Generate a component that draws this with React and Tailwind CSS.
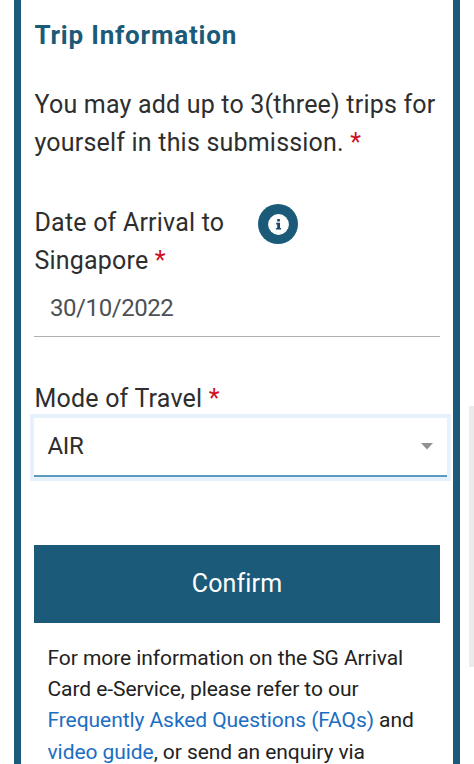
import { useState } from 'react';

export default function App() {
  const [date, setDate] = useState('30/10/2022');

  return (
    <div className="relative h-[764px] w-[474px] overflow-hidden bg-white font-['Roboto','Liberation_Sans',sans-serif] text-[#2e2e2e]">
      <main className="ml-[14px] h-full w-[446px] border-x-[7px] border-[#1b5a78] px-[13px] pt-[17px]">
        {/* Trip section */}
        <h2 className="h-[69px] pl-[0.5px] text-[26px] leading-[37px] font-bold tracking-[0.8px] whitespace-nowrap text-[#1b5a78]">
          Trip Information
        </h2>
        <p className="h-[118px] pl-[0.5px] text-[25px] leading-[38.4px] tracking-[0.2px] whitespace-nowrap">
          You may add up to 3(three) trips for
          <br />
          yourself in this submission. <Required />
        </p>

        {/* Arrival date */}
        <div className="flex h-[77px] items-start">
          <label htmlFor="arrival" className="w-[224px] pl-[0.5px] text-[25px] leading-[38.4px] tracking-[0.2px] whitespace-nowrap">
            Date of Arrival to
            <br />
            Singapore <Required />
          </label>
          <InfoButton />
        </div>
        <input
          id="arrival"
          className="block h-[56px] w-full border-b border-[#b0b0b0] px-4 pb-[2px] text-[24px] tracking-[-0.43px] text-[#4d5054] outline-none"
          value={date}
          onChange={(e) => setDate(e.target.value)}
        />

        {/* Travel mode */}
        <div className="mt-[43px] h-[38px] pl-[0.5px] text-[25px] leading-[38.4px] tracking-[0.2px] whitespace-nowrap">
          Mode of Travel <Required />
        </div>
        <div className="-mr-[7px] flex h-[59px] items-center justify-between border-b-2 border-[#5b9abf] bg-white pr-[14px] pl-[13.5px] shadow-[0_0_0_4px_#e6f1fb]">
          <span className="pb-px text-[24px] tracking-[-0.4px]">AIR</span>
          <svg className="h-[7px] w-3" viewBox="0 0 12 7" fill="#929292">
            <path d="M0 0h12L6 6.5z" />
          </svg>
        </div>

        <button className="mt-[68px] block h-[78px] w-full bg-[#1b5a78] text-[25px] tracking-[0.15px] text-white">
          Confirm
        </button>

        {/* Help text */}
        <p className="pt-5 pl-[13.5px] text-[21px] leading-[31.2px] tracking-[-0.07px] whitespace-nowrap text-[#222]">
          For more information on the SG Arrival
          <br />
          Card e-Service, please refer to our
          <br />
          <a className="text-[#1b6ec2]">Frequently Asked Questions (FAQs)</a> and
          <br />
          <a className="text-[#1b6ec2]">video guide</a>, or send an enquiry via
        </p>
      </main>

      {/* Scroll thumb */}
      <div className="absolute top-[406px] right-0 h-[261px] w-[5px] bg-[#ebebeb]" />
    </div>
  );
}

function Required() {
  return <span className="text-[#d0101c]">*</span>;
}

function InfoButton() {
  return (
    <button aria-label="Info" className="flex size-10 items-center justify-center rounded-full bg-[#1b5a78]">
      <svg className="size-[21px]" viewBox="0 0 21 21">
        <circle cx="10.5" cy="10.5" r="10.4" fill="#fff" />
        <path
          d="M9.2 5h2.7v2.4H9.2zM8.2 8.7h3.8v5.2h1.1v1.7H8.1v-1.7h1.1v-3.4h-1z"
          fill="#1b4a68"
        />
      </svg>
    </button>
  );
}
